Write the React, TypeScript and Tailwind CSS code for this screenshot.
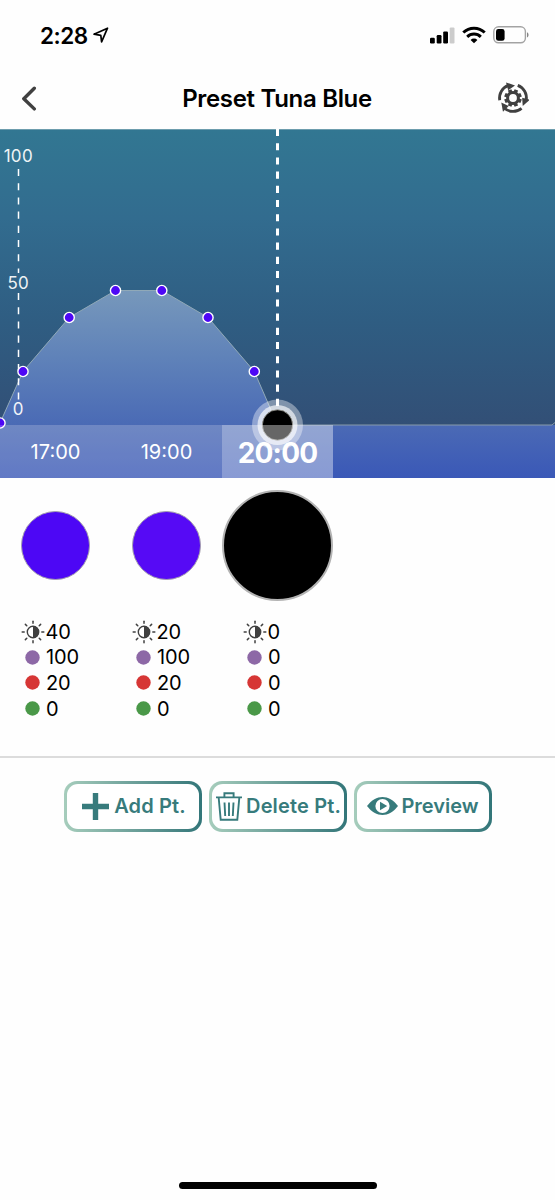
import type { ReactNode } from "react";

const POINTS: [number, number][] = [
  [0, 294],
  [23, 242.5],
  [69.2, 188.5],
  [115.5, 161.5],
  [161.8, 161.5],
  [208, 188.5],
  [254.3, 242.5],
];

const CHANNEL_COLORS = ["#8d68a6", "#d63635", "#4a9848"];

const PRESETS = [
  { time: "17:00", fill: "bg-[#4d07f5]", brightness: 40, levels: [100, 20, 0] },
  { time: "19:00", fill: "bg-[#560af5]", brightness: 20, levels: [100, 20, 0] },
  { time: "20:00", fill: "bg-black", brightness: 0, levels: [0, 0, 0], active: true },
];

function StatusBar() {
  return (
    <div className="flex h-[70px] items-center justify-between pl-10 pr-[26px]">
      <div className="flex items-center gap-[5px]">
        <span className="pt-px text-[22.5px] leading-7 font-semibold tracking-[-0.5px]">2:28</span>
        <svg width="16" height="16" viewBox="0 0 16 16" fill="none" stroke="black" strokeWidth="1.7" strokeLinejoin="round">
          <path d="M14.5 1.2 1 7.2l6.8 1.1.8 6.6z" />
        </svg>
      </div>
      <div className="flex items-center">
        <svg width="25" height="17" viewBox="0 0 25 17">
          <rect x="0" y="10.8" width="4.8" height="5.7" rx="1.2" />
          <rect x="6.7" y="8" width="4.8" height="8.5" rx="1.2" />
          <rect x="13.2" y="4.4" width="4.8" height="12.1" rx="1.2" />
          <rect x="19.7" y="0.4" width="4.8" height="16.1" rx="1.2" fill="#cccccc" />
        </svg>
        <svg className="ml-[7px]" width="24" height="18" viewBox="0 0 24 18" fill="none" stroke="black" strokeWidth="3">
          <path d="M1.3 6.5a15.5 15.5 0 0 1 21.4 0" />
          <path d="M5.2 10.8a9.8 9.8 0 0 1 13.6 0" />
          <path d="m12 17.2-3.4-3.3a4.8 4.8 0 0 1 6.8 0z" fill="black" stroke="none" />
        </svg>
        <svg className="ml-[7px]" width="36" height="18" viewBox="0 0 36 18">
          <rect x="0.8" y="0.8" width="31.6" height="16" rx="4.8" fill="none" stroke="#a3a3a3" strokeWidth="1.4" />
          <rect x="3" y="3" width="8.6" height="11.8" rx="2.4" />
          <path d="M34 6.2c2 .8 2 4.4 0 5.2z" fill="#858585" />
        </svg>
      </div>
    </div>
  );
}

function CycleGearIcon() {
  return (
    <svg width="32" height="32" viewBox="-16 -16 32 32">
      {[0, 120, 240].map((angle) => (
        <g key={angle} transform={`rotate(${angle})`}>
          <path d="M-13.3 2.2A13.4 13.4 0 0 1-4.6-12.6" fill="none" stroke="#404040" strokeWidth="2.8" />
          <path d="M-7-15.6 2-12.4-4.8-7.8z" fill="#404040" />
        </g>
      ))}
      <circle r="5.4" fill="none" stroke="#404040" strokeWidth="3" />
      {[0, 45, 90, 135, 180, 225, 270, 315].map((angle) => (
        <rect key={angle} x="-1.9" y="-8.8" width="3.8" height="3" fill="#404040" transform={`rotate(${angle + 22.5})`} />
      ))}
    </svg>
  );
}

function NavBar() {
  return (
    <div className="flex h-[59px] items-center justify-between pr-[26px] pl-[21px] pb-[3px]">
      <svg width="36" height="26" viewBox="0 0 36 26" fill="none" stroke="#404040" strokeWidth="3.4" strokeLinecap="round" strokeLinejoin="round">
        <path d="M13.3 3.2 2.8 13.7l10.5 10.2" />
      </svg>
      <h1 className="pt-[2px] text-[24px] leading-8 font-semibold tracking-[-0.32px]">Preset Tuna Blue</h1>
      <CycleGearIcon />
    </div>
  );
}

function Chart() {
  const line = POINTS.map(([x, y]) => `${x},${y}`).join(" ") + " 277.5,296";
  return (
    <svg className="block" width="555" height="349" viewBox="0 0 555 349" fontFamily="Inter, sans-serif">
      <defs>
        <linearGradient id="water" x1="0" y1="0" x2="0" y2="1">
          <stop offset="0" stopColor="#327792" />
          <stop offset="0.3" stopColor="#326c8f" />
          <stop offset="0.65" stopColor="#2f5d82" />
          <stop offset="1" stopColor="#324f76" />
        </linearGradient>
        <linearGradient id="area" x1="0" y1="0" x2="0" y2="1">
          <stop offset="0" stopColor="#7798bb" />
          <stop offset="0.5" stopColor="#5f82b9" />
          <stop offset="1" stopColor="#4a6ab5" />
        </linearGradient>
        <linearGradient id="bar" x1="0" y1="0" x2="0" y2="1">
          <stop offset="0" stopColor="#4b6ab5" />
          <stop offset="1" stopColor="#3a58b7" />
        </linearGradient>
      </defs>
      <rect width="555" height="296.5" fill="url(#water)" />
      <path d="M0 .5H555" stroke="#6d9dad" />
      <polygon points={`0,296.5 ${line} 277.5,296.5`} fill="url(#area)" />
      <polyline points={line} fill="none" stroke="#90a9b8" strokeWidth="1" />
      <rect y="296" width="555" height="53" fill="url(#bar)" />
      <path d="M277.5 296H552L555 293.5" fill="none" stroke="#879aab" strokeWidth="1" />
      <path d="M18.5 40V144" stroke="white" strokeWidth="1.5" strokeDasharray="7.1 7.1" />
      <path d="M18.5 164V271" stroke="white" strokeWidth="1.5" strokeDasharray="7.1 7.1" />
      <g fill="white" fontSize="17" textAnchor="middle" letterSpacing="0.3" opacity="0.92">
        <text x="18.3" y="32.5">100</text>
        <text x="18.3" y="159.5">50</text>
        <text x="18.3" y="286">0</text>
      </g>
      <path d="M277.5 0V278" stroke="white" strokeWidth="3" strokeDasharray="7.1 7.1" />
      {POINTS.map(([x, y]) => (
        <circle key={x} cx={x} cy={y} r="5.1" fill="#4d07f5" stroke="white" strokeWidth="1.4" />
      ))}
      <circle cx="277.5" cy="296" r="25.5" fill="white" fillOpacity="0.38" />
      <circle cx="277.5" cy="296" r="20" fill="white" fillOpacity="0.65" />
      <circle cx="277.5" cy="296" r="15.2" stroke="#a7a7a0" strokeWidth="0.8" />
    </svg>
  );
}

function TimeStrip() {
  return (
    <div className="absolute inset-x-0 bottom-0 flex h-[53px]">
      {PRESETS.map(({ time, active }) => (
        <div
          key={time}
          className={
            active
              ? "flex w-[111px] items-center justify-center bg-white/40 pt-[2px] text-[28px] font-bold tracking-[-0.8px] text-white"
              : "flex w-[111px] items-center justify-center bg-white/20 text-[20px] tracking-normal text-white"
          }
        >
          {time}
        </div>
      ))}
    </div>
  );
}

function BrightnessIcon() {
  return (
    <svg width="24" height="24" viewBox="-12 -12 24 24">
      {[0, 45, 90, 135, 180, 225, 270, 315].map((angle) => (
        <path key={angle} d="M0-8.8V-10.8" stroke="#404040" strokeWidth="1.5" strokeLinecap="round" transform={`rotate(${angle})`} />
      ))}
      <circle r="5.7" fill="white" stroke="#404040" strokeWidth="1.4" />
      <path d="M0-6A6 6 0 0 1 0 6z" fill="#404040" />
    </svg>
  );
}

function PresetColumn({ preset }: { preset: (typeof PRESETS)[number] }) {
  return (
    <div className="w-[111px]">
      <div className="flex h-[111px] items-center justify-center">
        <div
          className={
            preset.active
              ? `size-[111px] rounded-full border-2 border-[#b3b3b3] ${preset.fill}`
              : `size-[69px] rounded-full border border-[#a5a0ae] ${preset.fill}`
          }
        />
      </div>
      <div className="mt-[18px] pl-[20.5px] text-[20px] tracking-[-0.1px]">
        <div className="flex h-[25.6px] items-center">
          <BrightnessIcon />
          <span className="ml-px">{preset.brightness}</span>
        </div>
        {preset.levels.map((level, i) => (
          <div key={i} className="flex h-[25.6px] items-center pl-[4.5px]">
            <svg width="15" height="15" viewBox="0 0 15 15" className="mr-[6px]">
              <circle cx="7.5" cy="7.5" r="7.2" fill={CHANNEL_COLORS[i]} />
            </svg>
            <span>{level}</span>
          </div>
        ))}
      </div>
    </div>
  );
}

function ActionButton({ children }: { children: ReactNode }) {
  return (
    <button className="h-[51px] w-[138px] rounded-[13px] bg-linear-to-r from-[#a6cdbc] to-[#327679] p-[3px]">
      <span className="flex size-full items-center justify-center rounded-[11px] bg-white text-[20px] font-semibold whitespace-nowrap text-[#377b7c]">
        {children}
      </span>
    </button>
  );
}

export default function App() {
  return (
    <div className="flex h-[1200px] w-[555px] flex-col overflow-hidden bg-[#fefefe] font-['Inter',sans-serif] text-black">
      <StatusBar />
      <NavBar />
      <div className="relative">
        <Chart />
        <TimeStrip />
      </div>
      <div className="flex h-[278px] pt-[12px]">
        {PRESETS.map((preset) => (
          <PresetColumn key={preset.time} preset={preset} />
        ))}
      </div>
      <div className="h-[2px] shrink-0 bg-[#dcdcdc]" />
      <div className="mt-[23px] flex gap-[7px] pl-[64px]">
        <ActionButton>
          <svg className="ml-[2px] mr-[5px]" width="27" height="27" viewBox="0 0 27 27" stroke="currentColor" strokeWidth="5.4">
            <path d="M13.5 0v27M0 13.5h27" />
          </svg>
          <span className="pb-px tracking-[0.15px]">Add Pt.</span>
        </ActionButton>
        <ActionButton>
          <svg className="mr-[4px] ml-px mb-px shrink-0" width="26" height="29" viewBox="0 0 26 29" fill="none" stroke="currentColor" strokeWidth="1.9">
            <path d="M0 5.4h26M8.4 5V1.3h9.2V5M2.7 6l2 21.8h16.6l2-21.8M8.5 10.5l.7 13.5M13 10.5V24M17.5 10.5 16.8 24" />
          </svg>
          <span className="pb-px tracking-[0.15px]">Delete Pt.</span>
        </ActionButton>
        <ActionButton>
          <svg className="mr-[3px] mb-px" width="31" height="18" viewBox="0 0 31 18">
            <path d="M0 9C9-3 22-3 31 9 22 21 9 21 0 9Z" fill="currentColor" />
            <circle cx="15.5" cy="9" r="7.1" fill="white" />
            <path d="m13 4.8 7.2 4.2-7.2 4.2z" fill="currentColor" />
          </svg>
          <span className="pb-px tracking-normal">Preview</span>
        </ActionButton>
      </div>
      <div className="mt-auto mb-[11px] h-[7px] w-[198px] self-center rounded-full bg-black" />
    </div>
  );
}
